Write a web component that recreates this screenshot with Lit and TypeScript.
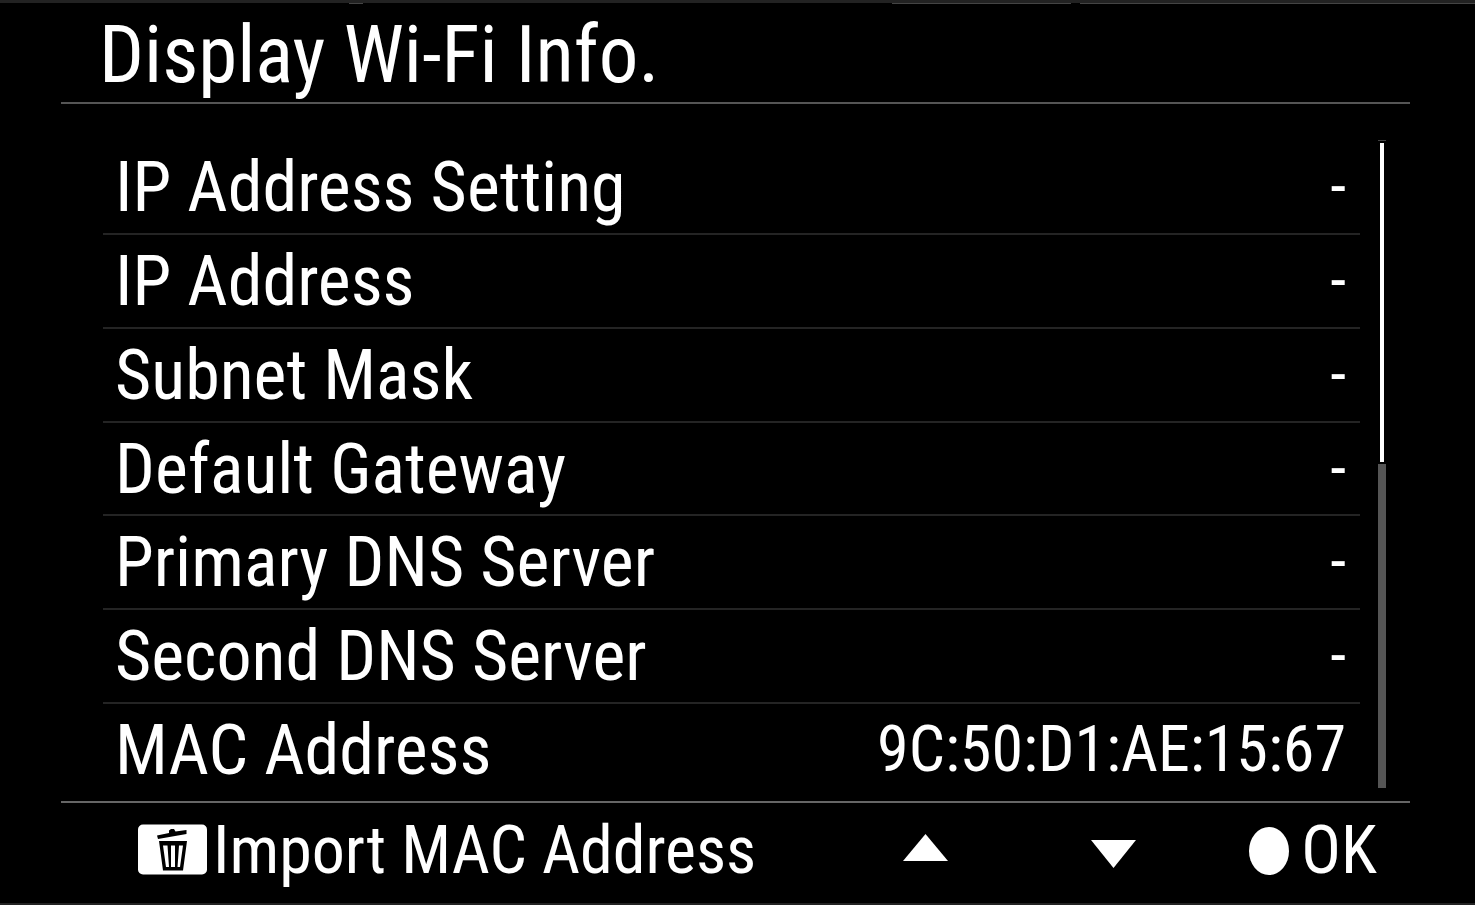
import { LitElement, html, css } from "lit";
import { customElement, state } from "lit/decorators.js";

interface InfoRow {
  label: string;
  value: string;
}

@customElement("app-root")
export class AppRoot extends LitElement {
  static styles = css`
    :host {
      display: flex;
      flex-direction: column;
      box-sizing: border-box;
      min-height: 100vh;
      padding: 0 65px 0 61px;
      background: #000;
      border-bottom: 2px solid #222;
      color: #fff;
      font-family: "Roboto Condensed", "Roboto", sans-serif;
      font-size: 70px;
      line-height: 80px;
      white-space: nowrap;
    }
    .edge {
      display: flex;
      height: 4px;
      margin: 0 -65px 0 -61px;
      background: linear-gradient(#222 3px, #000 3px);
    }
    .edge-mark {
      width: 14px;
      margin-left: 349px;
      background: linear-gradient(#222 3px, #444 3px);
    }
    .edge-mid {
      width: 179px;
      margin: 0 9px 0 529px;
      background: linear-gradient(#222 3px, #444 3px);
    }
    .edge-tail {
      flex: 1;
      background: linear-gradient(#222 3px, #444 3px);
    }
    header {
      height: 98px;
      padding-left: 38px;
      border-bottom: 2px solid #555;
    }
    h1 {
      margin: 0;
      font-size: 79px;
      line-height: 102px;
      font-weight: 400;
    }
    main {
      flex: 1;
      display: flex;
      gap: 18px;
      padding: 36px 24px 3px 42px;
    }
    dl {
      flex: 1;
      display: flex;
      flex-direction: column;
      margin: 0;
      padding-top: 1px;
    }
    .row {
      flex: 1;
      display: flex;
      align-items: center;
      justify-content: space-between;
      padding: 0 14px 0 12px;
      border-bottom: 2px solid #242424;
    }
    .row:last-child {
      border-color: transparent;
    }
    dd {
      margin: 0;
      font-size: 64px;
    }
    .scroll {
      display: flex;
      flex-direction: column;
      gap: 2px;
      width: 8px;
      margin-bottom: 10px;
      border-top: 1px solid #444;
    }
    .thumb {
      flex: 319;
      margin: 2px 2px 0;
      background: #fff;
    }
    .track {
      flex: 324;
      background: #555;
    }
    footer {
      display: flex;
      align-items: center;
      box-sizing: border-box;
      height: 102px;
      padding: 0 33px 4px 77px;
      border-top: 2px solid #666;
      font-size: 66px;
    }
    button {
      display: flex;
      align-items: center;
      padding: 0;
      border: 0;
      background: none;
      color: inherit;
      font: inherit;
    }
    .import {
      gap: 5px;
      margin-right: auto;
    }
    .nav {
      display: flex;
      gap: 143px;
      margin-right: 113px;
    }
    .ok {
      gap: 12px;
    }
    svg {
      display: block;
      flex: none;
    }
  `;

  @state() private rows: InfoRow[] = [
    { label: "IP Address Setting", value: "-" },
    { label: "IP Address", value: "-" },
    { label: "Subnet Mask", value: "-" },
    { label: "Default Gateway", value: "-" },
    { label: "Primary DNS Server", value: "-" },
    { label: "Second DNS Server", value: "-" },
    { label: "MAC Address", value: "9C:50:D1:AE:15:67" },
  ];

  render() {
    return html`
      <div class="edge">
        <span class="edge-mark"></span><span class="edge-mid"></span><span class="edge-tail"></span>
      </div>
      <header><h1>Display Wi-Fi Info.</h1></header>
      <main>
        <dl>
          ${this.rows.map(
            (r) => html`<div class="row"><dt>${r.label}</dt><dd>${r.value}</dd></div>`
          )}
        </dl>
        <div class="scroll"><div class="thumb"></div><div class="track"></div></div>
      </main>
      <footer>
        <button class="import">
          <svg width="70" height="54" viewBox="0 0 70 54" aria-hidden="true">
            <rect y="0.5" width="69" height="50" rx="5" fill="#fff" />
            <path d="M19 11.500 31 9V6.500L33 5H36L37.500 7.500 48.500 6V10L20 15Z" fill="#000" />
            <path
              fill-rule="evenodd"
              fill="#000"
              d="M21 17H49L45 46.500H25ZM25 21.500 28 43H31L29.500 21.500ZM33 21.500V43H37V21.500ZM41 21.500 39.500 43H42L45 21.500Z"
            />
          </svg>
          <span>Import MAC Address</span>
        </button>
        <div class="nav">
          <button aria-label="Up">
            <svg width="45" height="36" viewBox="0 0 45 36"><path d="M22.500 1 45 28H0Z" fill="#fff" /></svg>
          </button>
          <button aria-label="Down">
            <svg width="45" height="36" viewBox="0 0 45 36"><path d="M0 7H45L22.500 35Z" fill="#fff" /></svg>
          </button>
        </div>
        <button class="ok">
          <svg width="40" height="48" viewBox="0 0 40 48" aria-hidden="true">
            <ellipse cx="20" cy="24" rx="20" ry="24" fill="#fff" />
          </svg>
          <span>OK</span>
        </button>
      </footer>
    `;
  }
}
